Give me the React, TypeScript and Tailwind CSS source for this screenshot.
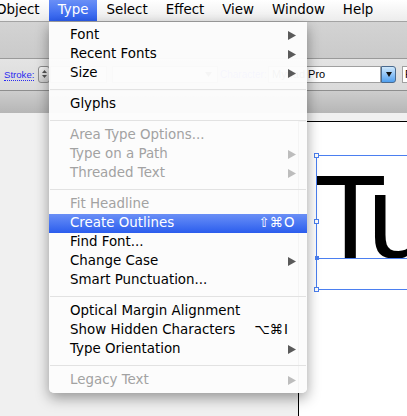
import React from 'react'

type Item = {
  label: string
  disabled?: boolean
  arrow?: boolean
  active?: boolean
  mods?: string
  keyChar?: string
}

const MENU: (Item | 'sep')[] = [
  { label: 'Font', arrow: true },
  { label: 'Recent Fonts', arrow: true },
  { label: 'Size', arrow: true },
  'sep',
  { label: 'Glyphs' },
  'sep',
  { label: 'Area Type Options...', disabled: true },
  { label: 'Type on a Path', disabled: true, arrow: true },
  { label: 'Threaded Text', disabled: true, arrow: true },
  'sep',
  { label: 'Fit Headline', disabled: true },
  { label: 'Create Outlines', active: true, mods: '⇧⌘', keyChar: 'O' },
  { label: 'Find Font...' },
  { label: 'Change Case', arrow: true },
  { label: 'Smart Punctuation...' },
  'sep',
  { label: 'Optical Margin Alignment' },
  { label: 'Show Hidden Characters', mods: '⌥⌘', keyChar: 'I' },
  { label: 'Type Orientation', arrow: true },
  'sep',
  { label: 'Legacy Text', disabled: true, arrow: true },
]

const BAR = ['Object', 'Type', 'Select', 'Effect', 'View', 'Window', 'Help']

function Arrow({ color }: { color: string }) {
  return (
    <svg width="8" height="9" viewBox="0 0 8 9" className="shrink-0">
      <polygon points="0,0 8,4.5 0,9" fill={color} />
    </svg>
  )
}

function MenuRow({ item }: { item: Item }) {
  const text = item.active ? 'text-white' : item.disabled ? 'text-[#a2a2a2]' : 'text-black'
  return (
    <div
      className={`flex h-[19px] items-center pl-[21px] pr-[11px] ${text} ${
        item.active ? 'bg-gradient-to-b from-[#6a8ff6] to-[#2b5ced]' : ''
      }`}
    >
      <span className="flex-1 whitespace-nowrap">{item.label}</span>
      {item.arrow && <Arrow color={item.disabled ? '#bdbdbd' : '#5a5a5a'} />}
      {item.keyChar && (
        <>
          <span className="mr-[1px] whitespace-nowrap">{item.mods}</span>
          <span className="w-[12px]">{item.keyChar}</span>
        </>
      )}
    </div>
  )
}

export default function App() {
  return (
    <div className="relative flex h-[416px] w-[407px] flex-col overflow-hidden bg-[#f0f0f0] font-['DejaVu_Sans',sans-serif] text-[13.4px]">
      {/* menu bar */}
      <div className="flex h-[22px] shrink-0 border-b border-[#a3a3a3] bg-gradient-to-b from-white to-[#ececec]">
        {BAR.map((name, i) => (
          <div
            key={name}
            className={`flex h-full items-center px-[9px] whitespace-nowrap ${i === 0 ? 'ml-[-13px]' : ''} ${
              name === 'Type' ? 'bg-gradient-to-b from-[#6a8ff6] to-[#2b5ced] text-white' : 'text-black'
            }`}
          >
            {name}
          </div>
        ))}
      </div>

      {/* toolbar */}
      <div className="h-[37px] shrink-0 border-b border-[#9a9a9a] bg-gradient-to-b from-[#d3d3d3] to-[#cacaca]" />
      <div className="flex h-[32px] shrink-0 items-center border-b border-[#8e8e8e] bg-gradient-to-b from-[#e4e4e4] to-[#dadada] font-['Liberation_Sans',sans-serif]">
        <div className="flex w-[220px] shrink-0 items-center pl-[4px]">
          <span className="w-[34px]">
            <span className="border-b border-dotted border-[#2b2bf0] text-[9.6px] leading-none text-[#2b2bf0]">Stroke:</span>
          </span>
          <div className="flex h-[17px] w-[12px] flex-col items-center justify-center gap-[2px] rounded-[3px] border border-[#8c8c8c] bg-gradient-to-b from-[#f5f5f5] to-[#cccccc]">
            <svg width="5" height="3" viewBox="0 0 5 3">
              <polygon points="2.5,0 5,3 0,3" fill="#555" />
            </svg>
            <svg width="5" height="3" viewBox="0 0 5 3">
              <polygon points="0,0 5,0 2.5,3" fill="#555" />
            </svg>
          </div>
          <div className="h-[17px] w-[57px] border border-[#a9a9a9] bg-white" />
          <div className="ml-[5px] flex h-[17px] w-[106px] items-center justify-end border border-[#a9a9a9] bg-white pr-[5px]">
            <svg width="7" height="5" viewBox="0 0 7 5">
              <polygon points="0,0 7,0 3.5,5" fill="#333" />
            </svg>
          </div>
        </div>
        <span className="w-[48px] shrink-0 text-[10px] text-[#2b2bf0]">Character:</span>
        <div className="flex h-[17px] w-[113px] shrink-0 items-center border border-[#a0a0a0] bg-white pl-[3px] text-[11px] text-black">
          Myriad Pro
        </div>
        <div className="flex h-[17px] w-[15px] shrink-0 items-center justify-center rounded-r-[3px] border border-[#4a6a8e] bg-gradient-to-b from-[#cfe8fb] to-[#4f9fee]">
          <svg width="6" height="5" viewBox="0 0 6 5">
            <polygon points="0,0 6,0 3,5" fill="#111" />
          </svg>
        </div>
        <div className="ml-[6px] flex h-[17px] w-[40px] shrink-0 items-center border border-[#a0a0a0] bg-white pl-[2px] text-[11px] text-black">
          Regular
        </div>
      </div>
      <div className="h-[22px] shrink-0 bg-gradient-to-b from-[#cdcdcd] to-[#b6b6b6]" />

      {/* canvas */}
      <div className="relative flex-1">
        <div className="absolute bottom-[-10px] left-[298px] right-[-10px] top-[8px] border-l border-t border-black bg-white" />
        <div className="absolute left-[314px] top-[44px] whitespace-nowrap font-['Liberation_Sans',sans-serif] text-[119px] leading-none tracking-[-15px] text-black">
          Tu
        </div>
        <div className="absolute left-[316px] right-[-10px] top-[42px] h-[135px] border border-[#4b7ff0]" />
        <div className="absolute left-[316px] right-0 top-[145px] h-px bg-[#4b7ff0]" />
        <div className="absolute left-[314px] top-[40px] h-[5px] w-[5px] border border-[#4b7ff0] bg-white" />
        <div className="absolute left-[314px] top-[106px] h-[5px] w-[5px] border border-[#4b7ff0] bg-white" />
        <div className="absolute left-[314px] top-[174px] h-[5px] w-[5px] border border-[#4b7ff0] bg-white" />
        <div className="absolute left-[315px] top-[143px] h-[4px] w-[4px] bg-[#4b7ff0]" />
      </div>

      {/* open Type menu */}
      <div className="absolute left-[49px] top-[22px] w-[258px] rounded-b-[5px] bg-[#fcfcfc]/[0.97] pb-[3px] pt-[4px] shadow-[0_5px_14px_rgba(0,0,0,0.38)]">
        {MENU.map((item, i) =>
          item === 'sep' ? (
            <div key={i} className="flex h-[12px] items-center px-[1px]">
              <div className="h-px w-full bg-[#e2e2e2]" />
            </div>
          ) : (
            <MenuRow key={i} item={item} />
          )
        )}
      </div>
    </div>
  )
}
